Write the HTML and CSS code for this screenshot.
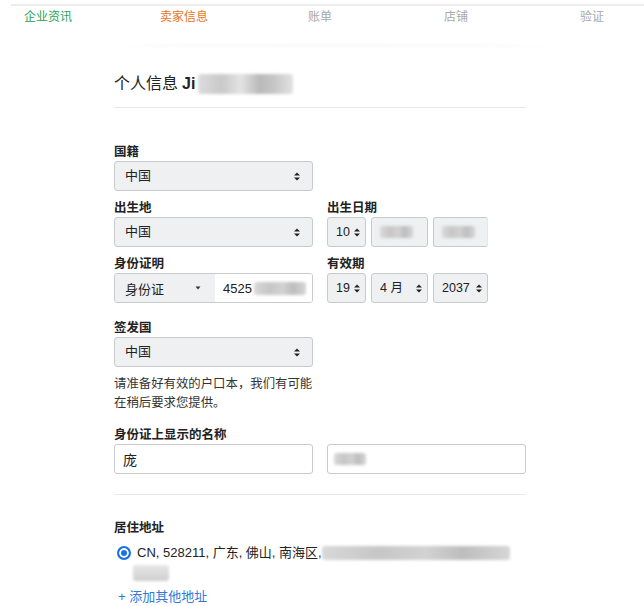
FILE: index.html
```html
<!DOCTYPE html>
<html lang="zh-CN">
<head>
<meta charset="utf-8">
<title>卖家信息</title>
<link rel="stylesheet" href="styles.css">
</head>
<body>
  <div class="topline"></div>
  <nav class="steps">
    <span class="step step-done">企业资讯</span>
    <span class="step step-current">卖家信息</span>
    <span class="step">账单</span>
    <span class="step">店铺</span>
    <span class="step">验证</span>
  </nav>
  <div class="card-edge"></div>

  <main class="form">
    <h1 class="title">个人信息 <b>Ji</b><span class="mask mask-title"></span></h1>
    <div class="divider"></div>

    <div class="row row-first">
      <div class="field">
        <div class="label">国籍</div>
        <div class="select"><span>中国</span><svg class="updown" viewBox="0 0 6 9"><path d="M0 3.6L3 0.4L6 3.6Z M0 5.4L3 8.6L6 5.4Z"/></svg></div>
      </div>
    </div>

    <div class="row row-birth">
      <div class="field">
        <div class="label">出生地</div>
        <div class="select"><span>中国</span><svg class="updown" viewBox="0 0 6 9"><path d="M0 3.6L3 0.4L6 3.6Z M0 5.4L3 8.6L6 5.4Z"/></svg></div>
      </div>
      <div class="field">
        <div class="label">出生日期</div>
        <div class="dates">
          <div class="select date date-d"><span>10</span><svg class="updown" viewBox="0 0 6 9"><path d="M0 3.6L3 0.4L6 3.6Z M0 5.4L3 8.6L6 5.4Z"/></svg></div>
          <div class="select date date-m"><span class="mask mask-date"></span></div>
          <div class="select date date-y faded"><span class="mask mask-date"></span></div>
        </div>
      </div>
    </div>

    <div class="row row-id">
      <div class="field">
        <div class="label">身份证明</div>
        <div class="idgroup">
          <div class="idtype"><span>身份证</span><svg class="caret" viewBox="0 0 6 4"><path d="M0.5 0.5H5.5L3 3.5Z"/></svg></div>
          <div class="idnum"><span>4525</span><span class="mask mask-id"></span></div>
        </div>
      </div>
      <div class="field">
        <div class="label">有效期</div>
        <div class="dates">
          <div class="select date date-d"><span>19</span><svg class="updown" viewBox="0 0 6 9"><path d="M0 3.6L3 0.4L6 3.6Z M0 5.4L3 8.6L6 5.4Z"/></svg></div>
          <div class="select date date-m"><span>4 月</span><svg class="updown" viewBox="0 0 6 9"><path d="M0 3.6L3 0.4L6 3.6Z M0 5.4L3 8.6L6 5.4Z"/></svg></div>
          <div class="select date date-y"><span>2037</span><svg class="updown" viewBox="0 0 6 9"><path d="M0 3.6L3 0.4L6 3.6Z M0 5.4L3 8.6L6 5.4Z"/></svg></div>
        </div>
      </div>
    </div>

    <div class="row row-issuer">
      <div class="field">
        <div class="label">签发国</div>
        <div class="select"><span>中国</span><svg class="updown" viewBox="0 0 6 9"><path d="M0 3.6L3 0.4L6 3.6Z M0 5.4L3 8.6L6 5.4Z"/></svg></div>
        <p class="help">请准备好有效的户口本，我们有可能<br>在稍后要求您提供。</p>
      </div>
    </div>

    <div class="row row-name">
      <div class="field field-wide">
        <div class="label">身份证上显示的名称</div>
        <div class="pair">
          <div class="input"><span>庞</span></div>
          <div class="input"><span class="mask mask-name"></span></div>
        </div>
      </div>
    </div>

    <div class="divider divider-addr"></div>

    <section class="address">
      <div class="label">居住地址</div>
      <div class="addr-line">
        <span class="radio"></span>
        <span class="addr-text">CN, 528211, 广东, 佛山, 南海区,</span>
        <span class="mask mask-addr"></span>
      </div>
      <div class="addr-line addr-line2"><span class="mask mask-addr2"></span></div>
      <a class="add-link" href="#">+ 添加其他地址</a>
    </section>
  </main>
</body>
</html>
```

FILE: styles.css
```css
html, body {
  margin: 0;
  padding: 0;
  background: #fff;
}

body {
  width: 644px;
  height: 606px;
  overflow: hidden;
  font-family: "Liberation Sans", "Noto Sans CJK SC", sans-serif;
  font-size: 13px;
  color: #222;
}

/* step bar */
.topline {
  height: 2px;
  margin: 4px 0 0 11px;
  background: #ececec;
}

.steps {
  display: grid;
  grid-template-columns: repeat(5, 136px);
  margin-left: -20px;
  font-size: 12px;
  line-height: 23px;
  color: #a9a9a9;
}

.step {
  text-align: center;
}

.step-done {
  color: #1ea35a;
}

.step-current {
  color: #e8741c;
}

.card-edge {
  height: 4px;
  margin: 15px 100px 0 122px;
  background: linear-gradient(to bottom, rgba(0, 0, 0, 0.04), rgba(0, 0, 0, 0));
  border-radius: 50%;
  filter: blur(1.5px);
}

/* form column */
.form {
  width: 412px;
  margin-left: 114px;
}

.title {
  display: flex;
  align-items: center;
  margin: 24px 0 0;
  font-size: 16px;
  font-weight: normal;
  line-height: 24px;
  color: #222;
}

.title b {
  margin-left: 4px;
  font-weight: bold;
}

.divider {
  height: 1px;
  margin-top: 11px;
  background: #e7e7e7;
}

.row {
  display: flex;
  gap: 14px;
}

.row-first {
  margin-top: 36px;
}

.row-birth {
  margin-top: 9px;
}

.row-id {
  margin-top: 9px;
}

.row-issuer {
  margin-top: 17px;
}

.row-name {
  margin-top: 14px;
}

.field {
  width: 199px;
}

.field-wide {
  width: 412px;
}

.label {
  font-size: 12.5px;
  font-weight: bold;
  line-height: 17px;
  color: #222;
}

.select {
  box-sizing: border-box;
  height: 30px;
  display: flex;
  align-items: center;
  justify-content: space-between;
  padding: 0 12px 0 10px;
  border: 1px solid #cacaca;
  border-radius: 3px;
  background: #eef0f2;
  line-height: 28px;
}

.updown {
  width: 6px;
  height: 9px;
  fill: #222;
}

.dates {
  display: flex;
  gap: 5px;
}

.date {
  padding: 0 5px 0 8px;
}

.date-d {
  width: 39px;
}

.date-m {
  width: 57px;
}

.date-y {
  width: 55px;
}

.date span {
  font-size: 12.5px;
}

.faded {
  border-right-color: #e6e6e6;
}

/* blurred personal data */
.mask {
  display: inline-block;
  background: linear-gradient(to right, #d8d8d8, #c6c6c6 30%, #d2d2d2 55%, #bdbdbd 75%, #d6d6d6);
  filter: blur(1.5px);
  border-radius: 3px;
}

.mask-title {
  width: 95px;
  height: 20px;
  margin-left: 3px;
  background: linear-gradient(to right, #dcdcdc, #c9c9c9 25%, #e3e3e3 45%, #b9b9b9 65%, #c6c6c6 80%, #e2e2e2);
}

.date .mask-date {
  width: 33px;
  height: 12px;
}

.idgroup {
  box-sizing: border-box;
  height: 30px;
  display: flex;
  border: 1px solid #cacaca;
  border-radius: 3px;
  overflow: hidden;
}

.idtype {
  width: 100px;
  display: flex;
  align-items: center;
  justify-content: space-between;
  padding: 0 14px 0 10px;
  box-sizing: border-box;
  background: #eef0f2;
}

.caret {
  width: 6px;
  height: 4px;
  fill: #333;
}

.idnum {
  flex: 1;
  display: flex;
  align-items: center;
  padding-left: 8px;
  background: #fff;
}

.mask-id {
  width: 52px;
  height: 13px;
  margin-left: 2px;
}

.help {
  margin: 8px 0 0;
  font-size: 12.4px;
  line-height: 19px;
  white-space: nowrap;
  color: #333;
}

.pair {
  display: flex;
  gap: 14px;
}

.input {
  box-sizing: border-box;
  width: 199px;
  height: 30px;
  display: flex;
  align-items: center;
  padding-left: 8px;
  border: 1px solid #cacaca;
  border-radius: 3px;
  background: #fff;
  font-size: 14px;
}

.mask-name {
  width: 32px;
  height: 12px;
  margin-left: -2px;
}

.divider-addr {
  margin-top: 20px;
}

/* address */
.address {
  margin-top: 25px;
}

.addr-line {
  display: flex;
  align-items: center;
  height: 20px;
  margin-top: 6px;
  line-height: 20px;
}

.radio {
  box-sizing: border-box;
  width: 14px;
  height: 14px;
  margin-left: 3px;
  border: 2px solid #1b73e8;
  border-radius: 50%;
  background: #1b73e8;
  box-shadow: inset 0 0 0 2px #fff;
}

.addr-text {
  margin-left: 6px;
  color: #222;
}

.mask-addr {
  width: 188px;
  height: 14px;
}

.addr-line2 {
  margin-top: 0;
  padding-left: 19px;
}

.mask-addr2 {
  width: 36px;
  height: 16px;
  background: linear-gradient(to bottom, #e6e6e6, #cfcfcf);
}

.add-link {
  display: block;
  margin-top: 4px;
  padding-left: 4px;
  line-height: 20px;
  color: #2f7ad6;
  text-decoration: none;
}
```
